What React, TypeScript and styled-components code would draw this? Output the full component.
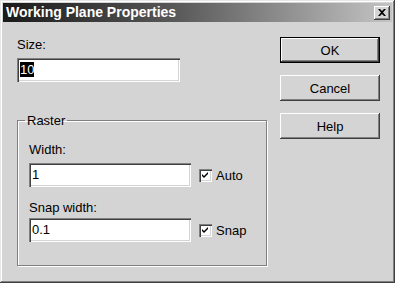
import * as React from 'react';
import styled, { createGlobalStyle } from 'styled-components';

const GlobalStyle = createGlobalStyle`
	html, body {
		margin: 0;
		padding: 0;
		background: #d4d4d4;
	}
	body {
		font-family: 'Liberation Sans', Arial, sans-serif;
	}
`;

const Window = styled.div`
	box-sizing: border-box;
	width: 395px;
	height: 283px;
	padding: 3px;
	background: #d4d4d4;
	box-shadow: inset -1px -1px #404040, inset 1px 1px #e6e6e6, inset -2px -2px #808080,
		inset 2px 2px #ffffff;
	display: flex;
	flex-direction: column;
`;

const TitleBar = styled.div`
	height: 19px;
	display: flex;
	align-items: center;
	justify-content: space-between;
	padding: 0 2px 0 3px;
	background: linear-gradient(to right, #1a1a1a 0%, #5a5a5a 45%, #c4c4c4 100%);
`;

const Title = styled.span`
	color: #ffffff;
	font-weight: bold;
	font-size: 14px;
	line-height: 19px;
`;

const CloseButton = styled.button`
	box-sizing: border-box;
	width: 16px;
	height: 14px;
	padding: 0;
	border: none;
	background: #d4d4d4;
	box-shadow: inset -1px -1px #404040, inset 1px 1px #ffffff, inset -2px -2px #808080;
	display: flex;
	align-items: center;
	justify-content: center;
`;

const Body = styled.div`
	flex: 1;
	display: flex;
	justify-content: space-between;
	padding: 15px 12px 0 14px;
`;

const LeftColumn = styled.div`
	width: 250px;
	display: flex;
	flex-direction: column;
`;

const Label = styled.div<{ gap?: number }>`
	font-size: 13px;
	line-height: 15px;
	color: #000;
	margin-bottom: ${(p) => p.gap ?? 6}px;
`;

const TextBox = styled.div<{ w: number }>`
	box-sizing: border-box;
	width: ${(p) => p.w}px;
	height: 24px;
	background: #ffffff;
	box-shadow: inset 1px 1px #808080, inset 2px 2px #404040, inset -1px -1px #ffffff,
		inset -2px -2px #d4d4d4;
	padding: 4px 0 0 3px;
	font-size: 13px;
	line-height: 15px;
	color: #000;
`;

const Selected = styled.span`
	background: #000;
	color: #fff;
`;

const Group = styled.fieldset`
	box-sizing: border-box;
	margin: 31px 0 0 0;
	width: 250px;
	height: 153px;
	padding: 14px 12px 0 11px;
	border: 1px solid #808080;
	box-shadow: inset 1px 1px #ffffff, 1px 1px #ffffff;
`;

const Legend = styled.legend`
	font-size: 13px;
	line-height: 15px;
	padding: 0 2px;
	margin-left: -4px;
	color: #000;
`;

const Row = styled.div<{ mb?: number }>`
	display: flex;
	align-items: center;
	margin-bottom: ${(p) => p.mb ?? 0}px;
`;

const Check = styled.div`
	box-sizing: border-box;
	width: 13px;
	height: 13px;
	margin-left: 8px;
	margin-right: 4px;
	background: #ffffff;
	box-shadow: inset 1px 1px #808080, inset 2px 2px #404040, inset -1px -1px #ffffff,
		inset -2px -2px #d4d4d4;
	display: flex;
	align-items: center;
	justify-content: center;
`;

const CheckText = styled.span`
	font-size: 13px;
	color: #000;
`;

const ButtonColumn = styled.div`
	display: flex;
	flex-direction: column;
	gap: 12px;
`;

const Button = styled.button<{ primary?: boolean }>`
	box-sizing: border-box;
	width: 100px;
	height: 26px;
	padding: 0;
	border: ${(p) => (p.primary ? '1px solid #000' : 'none')};
	background: #d4d4d4;
	box-shadow: inset -1px -1px #404040, inset 1px 1px #ffffff, inset -2px -2px #808080;
	font-family: 'Liberation Sans', Arial, sans-serif;
	font-size: 13px;
	color: #000;
`;

const CheckMark = () => (
	<svg width="7" height="7" viewBox="0 0 7 7">
		<path d="M0 2 L2 4 L6 0 L6 2 L2 6 L0 4 Z" fill="#000" />
	</svg>
);

const CloseGlyph = () => (
	<svg width="8" height="7" viewBox="0 0 8 7">
		<path d="M0 0h2l2 2 2-2h2L5 3.5 8 7H6L4 5 2 7H0l3-3.5z" fill="#000" />
	</svg>
);

const App = () => {
	return (
		<Window>
			<GlobalStyle />
			<TitleBar>
				<Title>Working Plane Properties</Title>
				<CloseButton>
					<CloseGlyph />
				</CloseButton>
			</TitleBar>

			<Body>
				<LeftColumn>
					<Label>Size:</Label>
					<TextBox w={163}>
						<Selected>10</Selected>
					</TextBox>

					<Group>
						<Legend>Raster</Legend>
						<Label>Width:</Label>
						<Row mb={13}>
							<TextBox w={162}>1</TextBox>
							<Check>
								<CheckMark />
							</Check>
							<CheckText>Auto</CheckText>
						</Row>
						<Label gap={3}>Snap width:</Label>
						<Row>
							<TextBox w={162}>0.1</TextBox>
							<Check>
								<CheckMark />
							</Check>
							<CheckText>Snap</CheckText>
						</Row>
					</Group>
				</LeftColumn>

				<ButtonColumn>
					<Button primary>OK</Button>
					<Button>Cancel</Button>
					<Button>Help</Button>
				</ButtonColumn>
			</Body>
		</Window>
	);
};

export default App;
